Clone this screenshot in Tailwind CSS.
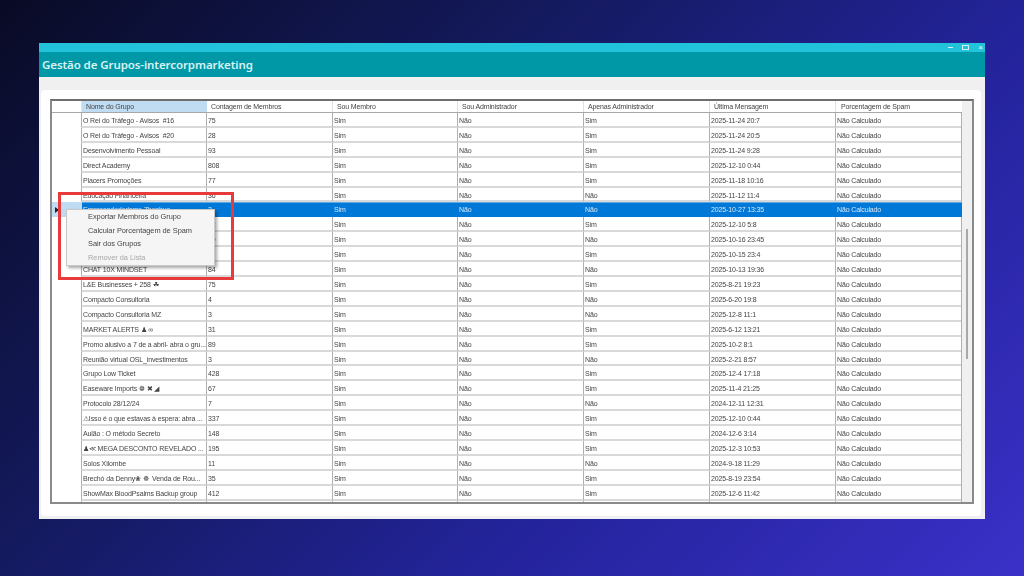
<!doctype html>
<html><head><meta charset="utf-8">
<script src="https://cdn.jsdelivr.net/npm/@tailwindcss/browser@4"></script>
</head>
<body class="w-[1024px] h-[576px] overflow-hidden pt-[43px] pl-[39px] bg-[linear-gradient(135deg,#090b25_0%,#141a5e_35%,#23239a_65%,#3a30c8_100%)] font-['Liberation_Sans',sans-serif] antialiased">
<div class="relative w-[946px] h-[476px] bg-[#f0f0f0] flex flex-col">
  <div class="h-[9px] bg-[#22c3da] flex justify-end items-center gap-[9px] pr-[2px] text-white">
    <div class="w-[5px] h-[1px] bg-white/80"></div>
    <div class="w-[7px] h-[5px] border border-white/80"></div>
    <div class="text-[8px] leading-[9px]">×</div>
  </div>
  <div class="h-[25px] bg-[#0097a7] flex items-center pl-[3px] text-[#d9f3f5] text-[11.5px] tracking-[-0.09px] font-semibold font-['Noto_Sans',sans-serif]">Gestão de Grupos-intercorpmarketing</div>
  <div class="flex-1 pl-[2px] pr-[4px] pb-[3px] pt-[13px]">
    <div class="h-full bg-white rounded-[4px] pl-[9px] pt-[9px]">
      <div class="w-[924px] h-[405px] border-2 border-[#8a8a8a] border-t-[#6e6e6e] flex bg-[#f0f0f0] overflow-hidden text-[7px] tracking-[-0.14px] text-[#444] blur-[0.3px]">
        <div class="w-[910px] flex flex-col bg-white">
          <div class="flex h-[12px] shrink-0 leading-[12px] border-b border-[#a8a8a8]">
            <div class="w-[30px] border-r border-[#e2e2e2]"></div>
            <div class="w-[125px] bg-[#c0dcf3] pl-[4px]">Nome do Grupo</div>
            <div class="w-[126px] pl-[4px] border-r border-[#e2e2e2]">Contagem de Membros</div>
            <div class="w-[125px] pl-[4px] border-r border-[#e2e2e2]">Sou Membro</div>
            <div class="w-[126px] pl-[4px] border-r border-[#e2e2e2]">Sou Administrador</div>
            <div class="w-[126px] pl-[4px] border-r border-[#e2e2e2]">Apenas Administrador</div>
            <div class="w-[126px] pl-[4px] border-r border-[#e2e2e2]">Última Mensagem</div>
            <div class="w-[126px] pl-[5px]">Porcentagem de Spam</div>
          </div>

          <div class="flex h-[14.92px]"><div class="w-[30px]"></div><div class="grid grid-cols-[125px_126px_125px_126px_126px_126px_126px] leading-[16px] *:border-l *:border-b-2 *:border-[#d9d9d9] *:border-l-[#b0b0b0] *:pl-[1px] *:truncate border-r border-[#b0b0b0]"><div>O Rei do Tráfego - Avisos&nbsp; #16</div><div>75</div><div>Sim</div><div>Não</div><div>Sim</div><div>2025-11-24 20:7</div><div>Não Calculado</div></div></div>
          <div class="flex h-[14.92px]"><div class="w-[30px]"></div><div class="grid grid-cols-[125px_126px_125px_126px_126px_126px_126px] leading-[16px] *:border-l *:border-b-2 *:border-[#d9d9d9] *:border-l-[#b0b0b0] *:pl-[1px] *:truncate border-r border-[#b0b0b0]"><div>O Rei do Tráfego - Avisos&nbsp; #20</div><div>28</div><div>Sim</div><div>Não</div><div>Sim</div><div>2025-11-24 20:5</div><div>Não Calculado</div></div></div>
          <div class="flex h-[14.92px]"><div class="w-[30px]"></div><div class="grid grid-cols-[125px_126px_125px_126px_126px_126px_126px] leading-[16px] *:border-l *:border-b-2 *:border-[#d9d9d9] *:border-l-[#b0b0b0] *:pl-[1px] *:truncate border-r border-[#b0b0b0]"><div>Desenvolvimento Pessoal</div><div>93</div><div>Sim</div><div>Não</div><div>Sim</div><div>2025-11-24 9:28</div><div>Não Calculado</div></div></div>
          <div class="flex h-[14.92px]"><div class="w-[30px]"></div><div class="grid grid-cols-[125px_126px_125px_126px_126px_126px_126px] leading-[16px] *:border-l *:border-b-2 *:border-[#d9d9d9] *:border-l-[#b0b0b0] *:pl-[1px] *:truncate border-r border-[#b0b0b0]"><div>Direct Academy</div><div>808</div><div>Sim</div><div>Não</div><div>Sim</div><div>2025-12-10 0:44</div><div>Não Calculado</div></div></div>
          <div class="flex h-[14.92px]"><div class="w-[30px]"></div><div class="grid grid-cols-[125px_126px_125px_126px_126px_126px_126px] leading-[16px] *:border-l *:border-b-2 *:border-[#d9d9d9] *:border-l-[#b0b0b0] *:pl-[1px] *:truncate border-r border-[#b0b0b0]"><div>Placers Promoções</div><div>77</div><div>Sim</div><div>Não</div><div>Sim</div><div>2025-11-18 10:16</div><div>Não Calculado</div></div></div>
          <div class="flex h-[14.92px]"><div class="w-[30px]"></div><div class="grid grid-cols-[125px_126px_125px_126px_126px_126px_126px] leading-[16px] *:border-l *:border-b-2 *:border-[#d9d9d9] *:border-l-[#b0b0b0] *:pl-[1px] *:truncate border-r border-[#b0b0b0]"><div>Educação Financeira</div><div>36</div><div>Sim</div><div>Não</div><div>Não</div><div>2025-11-12 11:4</div><div>Não Calculado</div></div></div>

          <div class="flex h-[14.92px]"><div class="w-[30px] bg-[#c0dcf3] flex items-center pl-[3px]"><div class="w-0 h-0 border-y-[3px] border-y-transparent border-l-[4px] border-l-[#222]"></div></div><div class="grid grid-cols-[125px_126px_125px_126px_126px_126px_126px] bg-[#0078d7] border-t border-[#5aa9e6] text-[#d5e8f8] leading-[14px] *:pl-[1px] *:truncate"><div>Empreendedorismo Zhonhua</div><div>3</div><div>Sim</div><div>Não</div><div>Não</div><div>2025-10-27 13:35</div><div>Não Calculado</div></div></div>

          <div class="flex h-[14.92px]"><div class="w-[30px]"></div><div class="grid grid-cols-[125px_126px_125px_126px_126px_126px_126px] leading-[16px] *:border-l *:border-b-2 *:border-[#d9d9d9] *:border-l-[#b0b0b0] *:pl-[1px] *:truncate border-r border-[#b0b0b0]"><div></div><div>82</div><div>Sim</div><div>Não</div><div>Sim</div><div>2025-12-10 5:8</div><div>Não Calculado</div></div></div>
          <div class="flex h-[14.92px]"><div class="w-[30px]"></div><div class="grid grid-cols-[125px_126px_125px_126px_126px_126px_126px] leading-[16px] *:border-l *:border-b-2 *:border-[#d9d9d9] *:border-l-[#b0b0b0] *:pl-[1px] *:truncate border-r border-[#b0b0b0]"><div></div><div>29</div><div>Sim</div><div>Não</div><div>Não</div><div>2025-10-16 23:45</div><div>Não Calculado</div></div></div>
          <div class="flex h-[14.92px]"><div class="w-[30px]"></div><div class="grid grid-cols-[125px_126px_125px_126px_126px_126px_126px] leading-[16px] *:border-l *:border-b-2 *:border-[#d9d9d9] *:border-l-[#b0b0b0] *:pl-[1px] *:truncate border-r border-[#b0b0b0]"><div></div><div></div><div>Sim</div><div>Não</div><div>Sim</div><div>2025-10-15 23:4</div><div>Não Calculado</div></div></div>
          <div class="flex h-[14.92px]"><div class="w-[30px]"></div><div class="grid grid-cols-[125px_126px_125px_126px_126px_126px_126px] leading-[16px] *:border-l *:border-b-2 *:border-[#d9d9d9] *:border-l-[#b0b0b0] *:pl-[1px] *:truncate border-r border-[#b0b0b0]"><div>CHAT 10X MINDSET</div><div>84</div><div>Sim</div><div>Não</div><div>Não</div><div>2025-10-13 19:36</div><div>Não Calculado</div></div></div>
          <div class="flex h-[14.92px]"><div class="w-[30px]"></div><div class="grid grid-cols-[125px_126px_125px_126px_126px_126px_126px] leading-[16px] *:border-l *:border-b-2 *:border-[#d9d9d9] *:border-l-[#b0b0b0] *:pl-[1px] *:truncate border-r border-[#b0b0b0]"><div>L&amp;E Businesses + 258 ☘</div><div>75</div><div>Sim</div><div>Não</div><div>Sim</div><div>2025-8-21 19:23</div><div>Não Calculado</div></div></div>
          <div class="flex h-[14.92px]"><div class="w-[30px]"></div><div class="grid grid-cols-[125px_126px_125px_126px_126px_126px_126px] leading-[16px] *:border-l *:border-b-2 *:border-[#d9d9d9] *:border-l-[#b0b0b0] *:pl-[1px] *:truncate border-r border-[#b0b0b0]"><div>Compacto Consultoria</div><div>4</div><div>Sim</div><div>Não</div><div>Não</div><div>2025-6-20 19:8</div><div>Não Calculado</div></div></div>
          <div class="flex h-[14.92px]"><div class="w-[30px]"></div><div class="grid grid-cols-[125px_126px_125px_126px_126px_126px_126px] leading-[16px] *:border-l *:border-b-2 *:border-[#d9d9d9] *:border-l-[#b0b0b0] *:pl-[1px] *:truncate border-r border-[#b0b0b0]"><div>Compacto Consultoria MZ</div><div>3</div><div>Sim</div><div>Não</div><div>Não</div><div>2025-12-8 11:1</div><div>Não Calculado</div></div></div>
          <div class="flex h-[14.92px]"><div class="w-[30px]"></div><div class="grid grid-cols-[125px_126px_125px_126px_126px_126px_126px] leading-[16px] *:border-l *:border-b-2 *:border-[#d9d9d9] *:border-l-[#b0b0b0] *:pl-[1px] *:truncate border-r border-[#b0b0b0]"><div>MARKET ALERTS ♟ ∞</div><div>31</div><div>Sim</div><div>Não</div><div>Sim</div><div>2025-6-12 13:21</div><div>Não Calculado</div></div></div>
          <div class="flex h-[14.92px]"><div class="w-[30px]"></div><div class="grid grid-cols-[125px_126px_125px_126px_126px_126px_126px] leading-[16px] *:border-l *:border-b-2 *:border-[#d9d9d9] *:border-l-[#b0b0b0] *:pl-[1px] *:truncate border-r border-[#b0b0b0]"><div>Promo alusivo a 7 de a abril- abra o gru...</div><div>89</div><div>Sim</div><div>Não</div><div>Sim</div><div>2025-10-2 8:1</div><div>Não Calculado</div></div></div>
          <div class="flex h-[14.92px]"><div class="w-[30px]"></div><div class="grid grid-cols-[125px_126px_125px_126px_126px_126px_126px] leading-[16px] *:border-l *:border-b-2 *:border-[#d9d9d9] *:border-l-[#b0b0b0] *:pl-[1px] *:truncate border-r border-[#b0b0b0]"><div>Reunião virtual OSL_investimentos</div><div>3</div><div>Sim</div><div>Não</div><div>Não</div><div>2025-2-21 8:57</div><div>Não Calculado</div></div></div>
          <div class="flex h-[14.92px]"><div class="w-[30px]"></div><div class="grid grid-cols-[125px_126px_125px_126px_126px_126px_126px] leading-[16px] *:border-l *:border-b-2 *:border-[#d9d9d9] *:border-l-[#b0b0b0] *:pl-[1px] *:truncate border-r border-[#b0b0b0]"><div>Grupo Low Ticket</div><div>428</div><div>Sim</div><div>Não</div><div>Sim</div><div>2025-12-4 17:18</div><div>Não Calculado</div></div></div>
          <div class="flex h-[14.92px]"><div class="w-[30px]"></div><div class="grid grid-cols-[125px_126px_125px_126px_126px_126px_126px] leading-[16px] *:border-l *:border-b-2 *:border-[#d9d9d9] *:border-l-[#b0b0b0] *:pl-[1px] *:truncate border-r border-[#b0b0b0]"><div>Easeware Imports ❁ ✖ ◢</div><div>67</div><div>Sim</div><div>Não</div><div>Sim</div><div>2025-11-4 21:25</div><div>Não Calculado</div></div></div>
          <div class="flex h-[14.92px]"><div class="w-[30px]"></div><div class="grid grid-cols-[125px_126px_125px_126px_126px_126px_126px] leading-[16px] *:border-l *:border-b-2 *:border-[#d9d9d9] *:border-l-[#b0b0b0] *:pl-[1px] *:truncate border-r border-[#b0b0b0]"><div>Protocolo 28/12/24</div><div>7</div><div>Sim</div><div>Não</div><div>Não</div><div>2024-12-11 12:31</div><div>Não Calculado</div></div></div>
          <div class="flex h-[14.92px]"><div class="w-[30px]"></div><div class="grid grid-cols-[125px_126px_125px_126px_126px_126px_126px] leading-[16px] *:border-l *:border-b-2 *:border-[#d9d9d9] *:border-l-[#b0b0b0] *:pl-[1px] *:truncate border-r border-[#b0b0b0]"><div>⚠Isso é o que estavas à espera: abra ...</div><div>337</div><div>Sim</div><div>Não</div><div>Sim</div><div>2025-12-10 0:44</div><div>Não Calculado</div></div></div>
          <div class="flex h-[14.92px]"><div class="w-[30px]"></div><div class="grid grid-cols-[125px_126px_125px_126px_126px_126px_126px] leading-[16px] *:border-l *:border-b-2 *:border-[#d9d9d9] *:border-l-[#b0b0b0] *:pl-[1px] *:truncate border-r border-[#b0b0b0]"><div>Aulão : O método Secreto</div><div>148</div><div>Sim</div><div>Não</div><div>Sim</div><div>2024-12-6 3:14</div><div>Não Calculado</div></div></div>
          <div class="flex h-[14.92px]"><div class="w-[30px]"></div><div class="grid grid-cols-[125px_126px_125px_126px_126px_126px_126px] leading-[16px] *:border-l *:border-b-2 *:border-[#d9d9d9] *:border-l-[#b0b0b0] *:pl-[1px] *:truncate border-r border-[#b0b0b0]"><div>♟≪ MEGA DESCONTO REVELADO ...</div><div>195</div><div>Sim</div><div>Não</div><div>Sim</div><div>2025-12-3 10:53</div><div>Não Calculado</div></div></div>
          <div class="flex h-[14.92px]"><div class="w-[30px]"></div><div class="grid grid-cols-[125px_126px_125px_126px_126px_126px_126px] leading-[16px] *:border-l *:border-b-2 *:border-[#d9d9d9] *:border-l-[#b0b0b0] *:pl-[1px] *:truncate border-r border-[#b0b0b0]"><div>Solos Xilombe</div><div>11</div><div>Sim</div><div>Não</div><div>Não</div><div>2024-9-18 11:29</div><div>Não Calculado</div></div></div>
          <div class="flex h-[14.92px]"><div class="w-[30px]"></div><div class="grid grid-cols-[125px_126px_125px_126px_126px_126px_126px] leading-[16px] *:border-l *:border-b-2 *:border-[#d9d9d9] *:border-l-[#b0b0b0] *:pl-[1px] *:truncate border-r border-[#b0b0b0]"><div>Brechó da Denny❀ ☸&nbsp; Venda de Rou...</div><div>35</div><div>Sim</div><div>Não</div><div>Sim</div><div>2025-8-19 23:54</div><div>Não Calculado</div></div></div>
          <div class="flex h-[14.92px]"><div class="w-[30px]"></div><div class="grid grid-cols-[125px_126px_125px_126px_126px_126px_126px] leading-[16px] *:border-l *:border-b-2 *:border-[#d9d9d9] *:border-l-[#b0b0b0] *:pl-[1px] *:truncate border-r border-[#b0b0b0]"><div>ShowMax BloodPsalms Backup group</div><div>412</div><div>Sim</div><div>Não</div><div>Sim</div><div>2025-12-6 11:42</div><div>Não Calculado</div></div></div>
          <div class="flex flex-1"><div class="w-[30px]"></div><div class="grid grid-cols-[125px_126px_125px_126px_126px_126px_126px] *:border-l *:border-l-[#b0b0b0] border-r border-[#b0b0b0]"><div></div><div></div><div></div><div></div><div></div><div></div><div></div></div></div>
        </div>
        <div class="flex-1 relative">
          <div class="absolute left-[4px] top-[128px] w-[2px] h-[130px] bg-[#a8a8a8]"></div>
        </div>
      </div>
    </div>
  </div>

  <div class="absolute left-[19px] top-[149px] w-[176px] h-[88px] border-[3px] border-[#e8393b]"></div>
  <div class="absolute left-[27px] top-[166px] w-[149px] h-[57px] bg-[#f5f5f5] border border-[#c8c8c8] shadow-[2px_2px_3px_rgba(0,0,0,0.35)] pl-[21px] text-[7.4px] tracking-[-0.03px] leading-[13.7px] text-[#444] blur-[0.3px]">
    <div>Exportar Membros do Grupo</div>
    <div>Calcular Porcentagem de Spam</div>
    <div>Sair dos Grupos</div>
    <div class="text-[#a8a8a8]">Remover da Lista</div>
  </div>
</div>
</body></html>
